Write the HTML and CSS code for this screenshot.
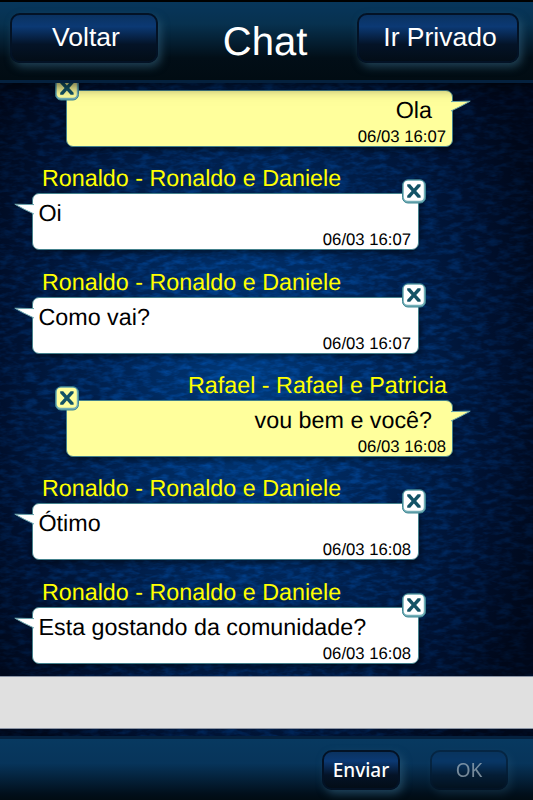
FILE: index.html
```
<!DOCTYPE html>
<html lang="pt-br">
  <head>
    <meta charset="utf-8" />
    <meta name="viewport" content="width=device-width, initial-scale=1" />
    <title>Chat</title>
    <link rel="stylesheet" href="styles.css">
  </head>
  <body>
    <svg class="texture" width="533" height="800" aria-hidden="true">
      <filter id="leather" x="0" y="0" width="100%" height="100%" color-interpolation-filters="sRGB">
        <feTurbulence type="fractalNoise" baseFrequency="0.08 0.2" numOctaves="3" seed="4" />
        <feColorMatrix values="0 0 0 0 0.02  0 0 0 0 0.38  0 0 0 0 0.8  2.6 0 0 0 -1.05" />
      </filter>
      <rect width="533" height="800" filter="url(#leather)" />
    </svg>

    <svg class="symbols" width="0" height="0" aria-hidden="true">
      <symbol id="close" viewBox="0 0 24 25">
        <rect class="close-edge" x="0.5" y="0.8" width="23" height="23.2" rx="5.5" />
        <rect class="close-face" x="1.8" y="1.8" width="20" height="20" rx="4" />
        <path class="close-x" d="M5.2 5.2h3l3.7 4.3 3.7-4.3h3v2l-4.4 4.8 4.4 4.8v2h-3l-3.7-4.3-3.7 4.3h-3v-2l4.4-4.8-4.4-4.8z" />
      </symbol>
      <symbol id="tail" viewBox="0 0 20 12">
        <path class="tail-shape" d="M20 1.6L0.8 1.2Q10 6.5 20 11" />
      </symbol>
    </svg>

    <div class="app">
      <header class="header">
        <button type="button" class="btn btn-back">Voltar</button>
        <h1>Chat</h1>
        <button type="button" class="btn btn-private">Ir Privado</button>
      </header>

      <main class="messages">
        <div class="message mine">
          <div class="bubble">
            <svg class="tail"><use href="#tail" /></svg>
            <svg class="close"><use href="#close" /></svg>
            <p class="text">Ola</p>
            <p class="time">06/03 16:07</p>
          </div>
        </div>
        <div class="message">
          <p class="name">Ronaldo - Ronaldo e Daniele</p>
          <div class="bubble">
            <svg class="tail"><use href="#tail" /></svg>
            <svg class="close"><use href="#close" /></svg>
            <p class="text">Oi</p>
            <p class="time">06/03 16:07</p>
          </div>
        </div>
        <div class="message">
          <p class="name">Ronaldo - Ronaldo e Daniele</p>
          <div class="bubble">
            <svg class="tail"><use href="#tail" /></svg>
            <svg class="close"><use href="#close" /></svg>
            <p class="text">Como vai?</p>
            <p class="time">06/03 16:07</p>
          </div>
        </div>
        <div class="message mine">
          <p class="name">Rafael - Rafael e Patricia</p>
          <div class="bubble">
            <svg class="tail"><use href="#tail" /></svg>
            <svg class="close"><use href="#close" /></svg>
            <p class="text">vou bem e você?</p>
            <p class="time">06/03 16:08</p>
          </div>
        </div>
        <div class="message">
          <p class="name">Ronaldo - Ronaldo e Daniele</p>
          <div class="bubble">
            <svg class="tail"><use href="#tail" /></svg>
            <svg class="close"><use href="#close" /></svg>
            <p class="text">Ótimo</p>
            <p class="time">06/03 16:08</p>
          </div>
        </div>
        <div class="message">
          <p class="name">Ronaldo - Ronaldo e Daniele</p>
          <div class="bubble">
            <svg class="tail"><use href="#tail" /></svg>
            <svg class="close"><use href="#close" /></svg>
            <p class="text">Esta gostando da comunidade?</p>
            <p class="time">06/03 16:08</p>
          </div>
        </div>
      </main>

      <input type="text" class="message-input" aria-label="Mensagem" />

      <footer class="footer">
        <button type="button" class="btn btn-small">Enviar</button>
        <button type="button" class="btn btn-small" disabled>OK</button>
      </footer>
    </div>
  </body>
</html>
```
FILE: styles.css
```
* {
  box-sizing: border-box;
}
body {
  margin: 0;
  font-family: "Liberation Sans", Arial, sans-serif;
  text-rendering: geometricPrecision;
  background: radial-gradient(ellipse 310px 480px at 250px 390px, #003a7c 0%, #002455 42%, #00102e 80%, #00081a 100%);
}
h1,
p {
  margin: 0;
  font-weight: normal;
}
.texture {
  position: absolute;
  top: 0;
  left: 0;
  opacity: 0.48;
  -webkit-mask-image: radial-gradient(ellipse 330px 480px at 250px 390px, #000 20%, rgba(0, 0, 0, 0.2) 100%);
  mask-image: radial-gradient(ellipse 330px 480px at 250px 390px, #000 20%, rgba(0, 0, 0, 0.2) 100%);
}
.symbols {
  position: absolute;
}
.app {
  position: relative;
  display: flex;
  flex-direction: column;
  height: 800px;
  overflow: hidden;
}

/* header */
.header {
  position: relative;
  z-index: 1;
  display: flex;
  align-items: flex-start;
  justify-content: space-between;
  height: 83px;
  padding: 11px 14px 0 10px;
  border-top: 2px solid #000;
  border-bottom: 3px solid #05213e;
  background: linear-gradient(#07365b 0%, #07314f 28%, #020e17 72%, #010c13 100%);
  box-shadow: 0 2px 14px rgba(0, 0, 0, 0.75);
}
.header h1 {
  padding: 6px 0 0 15px;
  color: #fff;
  font-size: 40px;
  line-height: 46px;
}
.btn {
  padding: 0;
  border: 2px solid #031225;
  border-radius: 10px;
  background: linear-gradient(#0a3260 0%, #0b3974 25%, #041327 64%, #030d17 100%);
  box-shadow: 3px 4px 8px rgba(55, 105, 135, 0.55);
  color: #fff;
  font-family: inherit;
  font-size: 26.5px;
}
.btn-back {
  width: 148px;
  height: 50px;
  padding: 0 0 2px 4px;
}
.btn-private {
  width: 162px;
  height: 50px;
  padding: 0 0 2px 4px;
}

/* messages */
.messages {
  display: flex;
  flex: 1;
  flex-direction: column;
  justify-content: flex-end;
  gap: 19.3px;
  min-height: 0;
  padding-bottom: 12.4px;
  overflow: hidden;
}
.message {
  flex: none;
  width: 387px;
  margin-left: 32px;
}
.message.mine {
  margin-left: 66px;
  text-align: right;
}
.name {
  height: 27px;
  padding: 0 6px 0 10px;
  color: #ff0;
  font-size: 23.3px;
  line-height: 25px;
}
.bubble {
  position: relative;
  height: 57px;
  padding: 6px 7px 0 5.5px;
  border: 1px solid #44818c;
  border-radius: 7px;
  background: #fff;
  box-shadow: 1px 3px 6px rgba(0, 0, 0, 0.5);
  color: #000;
}
.mine .bubble {
  background: #ffff9c;
}
.text {
  height: 29px;
  font-size: 23.3px;
  line-height: 26px;
}
.mine .text {
  padding-right: 13px;
}
.time {
  font-size: 16.7px;
  line-height: 22px;
  text-align: right;
}
.mine .time {
  margin-right: -1px;
}
.tail {
  position: absolute;
  top: 9px;
  left: -19px;
  width: 20px;
  height: 12px;
}
.mine .tail {
  right: -19px;
  left: auto;
  transform: scaleX(-1);
}
.tail-shape {
  fill: var(--face, #fff);
  stroke: #65a0a9;
  stroke-width: 1;
}
.close {
  position: absolute;
  top: -15px;
  right: -8px;
  width: 24px;
  height: 25px;
}
.mine .close {
  right: auto;
  left: -12px;
}
.close-edge {
  fill: #73adb6;
  stroke: #3f8793;
}
.close-face {
  fill: var(--face, #fff);
}
.close-x {
  fill: #145366;
}

/* own messages use the yellow variant of the icons */
.mine {
  --face: #ffff9c;
}

/* footer */
.message-input {
  width: 100%;
  height: 53px;
  padding: 0 10px;
  border: 1px solid #8a93a3;
  border-width: 1px 0;
  border-radius: 0;
  background: #e0e0e0;
  font-size: 23px;
}
.footer {
  display: flex;
  justify-content: flex-end;
  gap: 30px;
  height: 64px;
  margin-top: 7px;
  padding: 11px 25px 0 0;
  border-top: 3px solid #05213e;
  background: linear-gradient(#073960 0%, #07345a 40%, #010f1b 90%, #010c13 100%);
}
.btn-small {
  width: 78px;
  height: 40px;
  padding: 0 0 1px;
  font-family: "Noto Sans", sans-serif;
  font-size: 19px;
  font-weight: 500;
}
.btn-small:disabled {
  color: #fff;
  font-weight: 400;
  opacity: 0.45;
}
```
